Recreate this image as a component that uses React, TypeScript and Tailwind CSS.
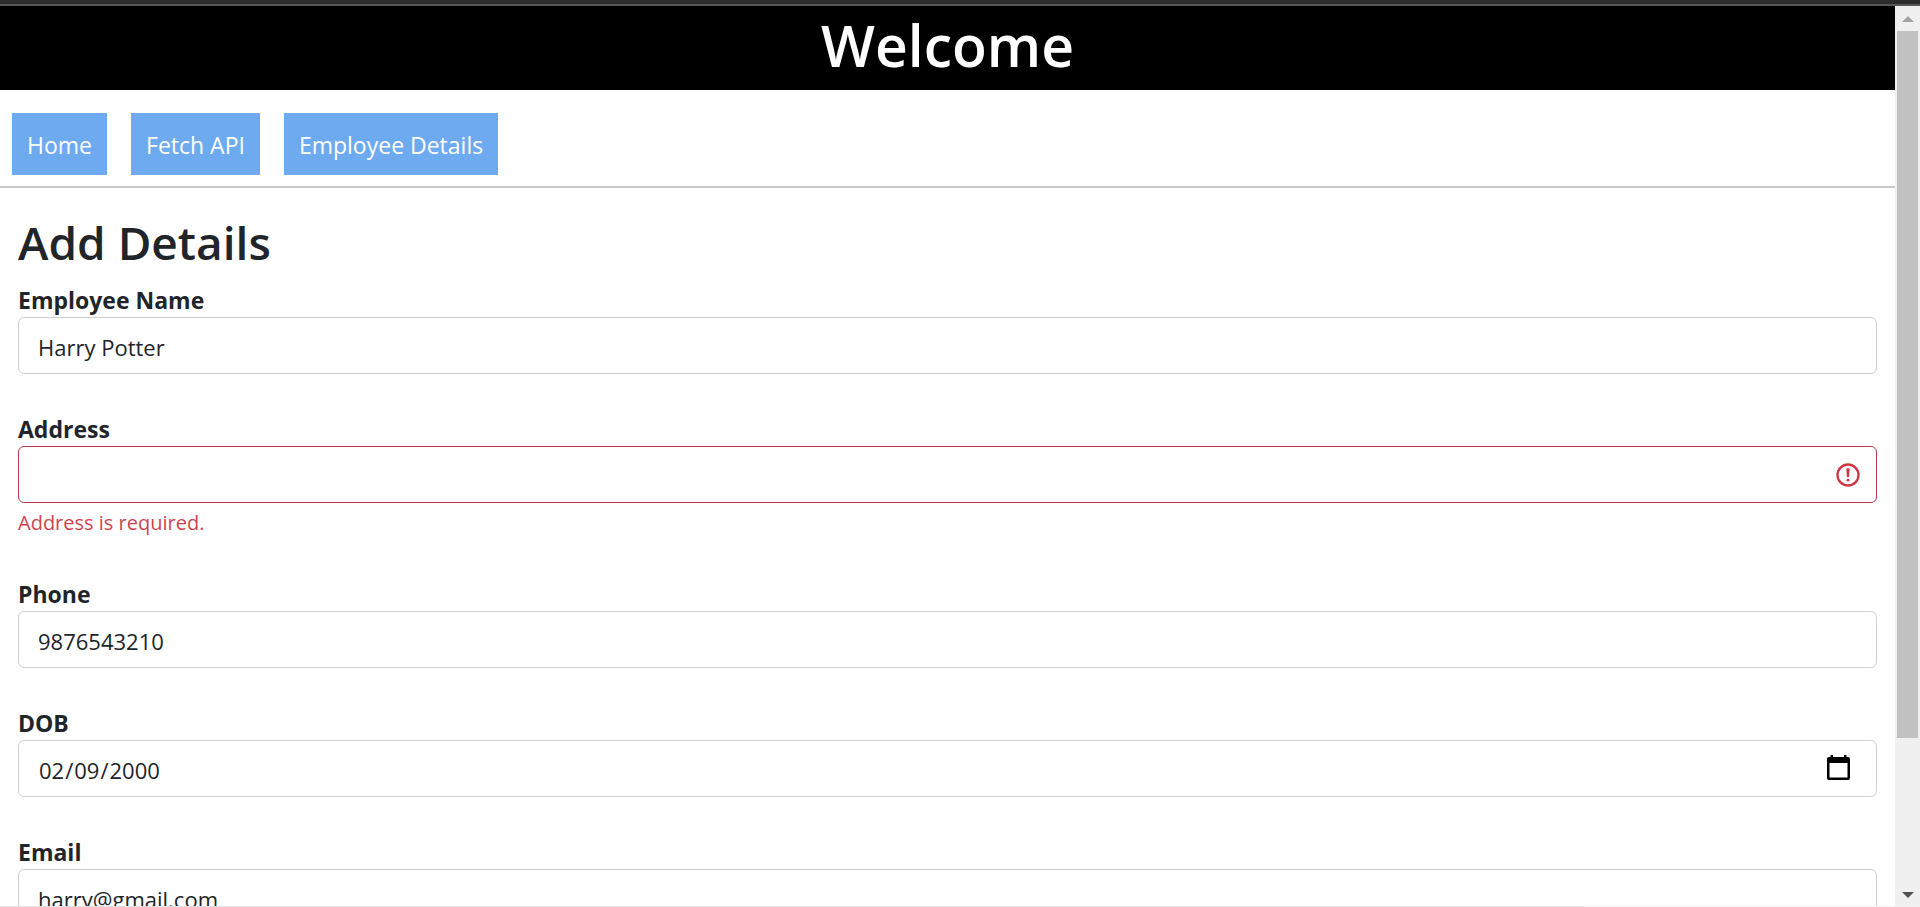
import React, { useState } from "react";

const links = ["Home", "Fetch API", "Employee Details"];

type FieldProps = {
  id: string;
  label: string;
  type?: string;
  initial: string;
  error?: string;
  icon?: React.ReactNode;
};

function Field({ id, label, type = "text", initial, error, icon }: FieldProps) {
  const [value, setValue] = useState(initial);
  return (
    <div className="flex flex-col">
      <label htmlFor={id} className="pt-0.5 text-[23px] leading-[34px] font-bold">
        {label}
      </label>
      <div className="relative">
        <input
          id={id}
          type={type}
          value={value}
          onChange={(e) => setValue(e.target.value)}
          aria-invalid={error ? true : undefined}
          className={
            "block h-[57px] w-full rounded-md border bg-white pt-0.5 pr-16 pl-[19px] text-[22px] leading-9 outline-none [&::-webkit-calendar-picker-indicator]:opacity-0 " +
            (error ? "border-[#b83a48]" : "border-[#ced0d3]")
          }
        />
        {icon}
      </div>
      {error && <p className="mt-1 text-xl leading-8 text-[#cf4450]">{error}</p>}
    </div>
  );
}

function AlertIcon() {
  return (
    <svg
      viewBox="0 0 12 12"
      fill="none"
      stroke="#d03545"
      className="pointer-events-none absolute top-[15px] right-[15px] size-7"
    >
      <circle cx="6" cy="6" r="4.5" />
      <path strokeLinejoin="round" d="M5.8 3.6h.4L6 6.5z" />
      <circle cx="6" cy="8.2" r=".6" fill="#d03545" stroke="none" />
    </svg>
  );
}

function CalendarIcon() {
  return (
    <svg
      viewBox="0 0 23 26"
      className="pointer-events-none absolute top-[14px] right-[27px] h-[26px] w-[23px]"
    >
      <path
        fillRule="evenodd"
        d="M3.5 1h2.500v2h11v-2h2.500v2h1.500a2 2 0 0 1 2 2v19a2 2 0 0 1-2 2h-19a2 2 0 0 1-2-2V5a2 2 0 0 1 2-2h1.500zM2.500 9v14.500h18V9z"
      />
    </svg>
  );
}

export default function App() {
  return (
    <div className="flex h-screen flex-col overflow-hidden bg-white font-['Open_Sans','Noto_Sans',sans-serif] text-[#212529]">
      <div className="h-1.5 shrink-0 border-b-2 border-[#565656] bg-[#2d2d2d]" />
      <div className="flex min-h-0 flex-1">
        <div className="flex min-w-0 flex-1 flex-col overflow-hidden">
          <header className="flex h-[84px] shrink-0 justify-center bg-black">
            <h1 className="text-[57px] leading-[78px] font-semibold text-white">Welcome</h1>
          </header>
          <nav className="flex shrink-0 gap-6 border-b-2 border-[#c8c8c8] px-3 pt-[23px] pb-[11px]">
            {links.map((text) => (
              <a
                key={text}
                href="#"
                className="flex h-[62px] items-center bg-[#6eaaf0] px-[15px] pt-0.5 text-[23px] whitespace-nowrap text-white"
              >
                {text}
              </a>
            ))}
          </nav>
          <main className="px-[18px] pt-6">
            <h2 className="mb-2 text-[46px] leading-[61px] font-semibold">Add Details</h2>
            <form className="flex flex-col gap-9">
              <Field id="name" label="Employee Name" initial="Harry Potter" />
              <Field
                id="address"
                label="Address"
                initial=""
                error="Address is required."
                icon={<AlertIcon />}
              />
              <Field id="phone" label="Phone" type="tel" initial="9876543210" />
              <Field
                id="dob"
                label="DOB"
                type="date"
                initial="2000-02-09"
                icon={<CalendarIcon />}
              />
              <Field id="email" label="Email" type="email" initial="harry@gmail.com" />
            </form>
          </main>
        </div>
        <div aria-hidden="true" className="flex w-[25px] shrink-0 flex-col items-center bg-[#f0f0f0]">
          <svg viewBox="0 0 12 6" className="mt-[10px] mb-[9px] h-[6px] w-3 shrink-0" fill="#a3a3a3">
            <path d="M6 0l6 6H0z" />
          </svg>
          <div className="flex min-h-0 w-[21px] flex-1 flex-col">
            <div className="h-[83%] bg-[#c1c1c1]" />
          </div>
          <svg viewBox="0 0 12 6" className="mt-[9px] mb-2 h-[6px] w-3 shrink-0" fill="#505050">
            <path d="M0 0h12L6 6z" />
          </svg>
        </div>
      </div>
      <div className="h-px shrink-0 bg-[#f2f2f2]">
        <div className="h-px w-[82.5%] bg-[#e2e2e2]" />
      </div>
    </div>
  );
}
